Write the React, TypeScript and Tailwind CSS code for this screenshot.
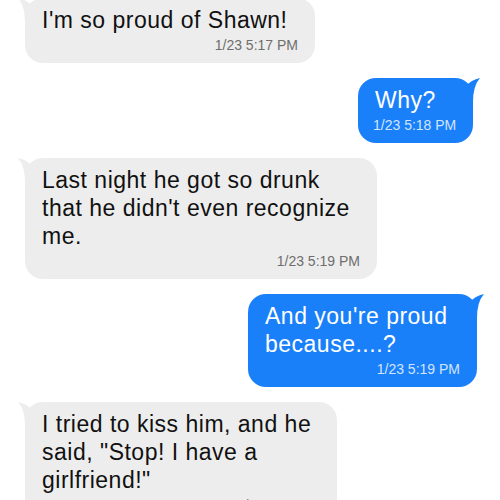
import React from 'react';

type Side = 'in' | 'out';

interface Msg {
  side: Side;
  text: string;
  time: string;
  width: string;
  edge: string;
}

const messages: Msg[] = [
  { side: 'in', text: "I'm so proud of Shawn!", time: '1/23 5:17 PM', width: 'w-[290px]', edge: 'ml-[25px]' },
  { side: 'out', text: 'Why?', time: '1/23 5:18 PM', width: 'w-[115px]', edge: 'mr-[27px]' },
  { side: 'in', text: "Last night he got so drunk that he didn't even recognize me.", time: '1/23 5:19 PM', width: 'w-[352px]', edge: 'ml-[25px]' },
  { side: 'out', text: "And you're proud because....?", time: '1/23 5:19 PM', width: 'w-[229px]', edge: 'mr-[23px]' },
  { side: 'in', text: 'I tried to kiss him, and he said, "Stop! I have a girlfriend!"', time: '1/23 5:20 PM', width: 'w-[312px]', edge: 'ml-[25px]' },
];

// little horn at the top corner of each bubble
const Tail: React.FC<{ side: Side }> = ({ side }) => (
  <svg
    width="26"
    height="24"
    viewBox="0 0 26 24"
    className={
      side === 'in'
        ? 'absolute -left-[7px] top-0 fill-[#ededed]'
        : 'absolute -right-[7px] top-0 -scale-x-100 fill-[#1a80fa]'
    }
  >
    <path d="M0,0 Q9,2 14,8 L14,24 L7,24 Q7,8 0,0 Z" />
  </svg>
);

const Bubble: React.FC<{ msg: Msg }> = ({ msg }) => {
  const isIn = msg.side === 'in';
  return (
    <div className={`flex ${isIn ? 'justify-start' : 'justify-end'}`}>
      <div
        className={`relative ${msg.width} ${msg.edge} rounded-[18px] pt-2 pb-[10px] pl-[15px] pr-[14px] ${
          isIn ? 'bg-[#ededed] text-[#111111]' : 'bg-[#1a80fa] text-white'
        }`}
      >
        <Tail side={msg.side} />
        <p className="relative pl-[2px] text-[23px] leading-[28px] tracking-[0.5px]">{msg.text}</p>
        <div
          className={`relative mt-[3px] pr-[3px] text-right text-[14px] leading-4 whitespace-nowrap ${
            isIn ? 'text-[#6e6e6e]' : 'text-[#d3e5fe]'
          }`}
        >
          {msg.time}
        </div>
      </div>
    </div>
  );
};

export default function App() {
  return (
    <div className="w-[500px] h-[500px] overflow-hidden bg-white font-['Liberation_Sans',Arial,sans-serif]">
      <div className="-mt-[2px] flex flex-col gap-[15px]">
        {messages.map((m, i) => (
          <Bubble key={i} msg={m} />
        ))}
      </div>
    </div>
  );
}
